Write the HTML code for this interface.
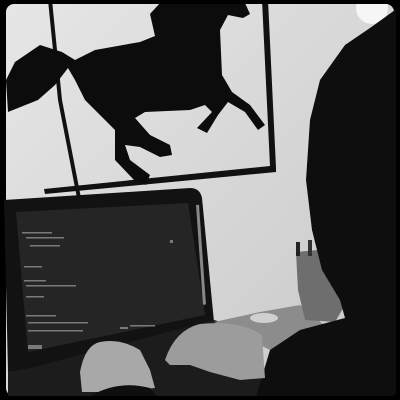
<!DOCTYPE html>
<html><head><style>html,body{margin:0;padding:0;background:#000}svg{display:block}</style></head>
<body>
<svg width="400" height="400" viewBox="0 0 400 400" xmlns="http://www.w3.org/2000/svg">
<defs>
<linearGradient id="w" x1="0" y1="0" x2="1" y2="1"><stop offset="0" stop-color="#e6e6e6"/><stop offset="1" stop-color="#c8c8c8"/></linearGradient>
</defs>
<rect width="400" height="400" fill="#000"/>
<rect x="6" y="4" width="388" height="392" rx="8" fill="url(#w)"/>
<ellipse cx="372" cy="8" rx="16" ry="16" fill="#f6f6f6"/>
<!-- frame -->
<path d="M262 0 L268 0 L276 168 L276 172 L45 194 L44 189 L270 166Z" fill="#111"/>
<path d="M48 0 L52 0 L62 100 L81 198 L77 198 L58 100Z" fill="#111"/>
<!-- horse -->
<path d="M8 112 L6 80 L15 62 L40 45 L62 52 L75 60 L95 50 L140 42 L155 36 L150 14 L160 3 L200 0 L245 3 L250 14 L243 18 L228 15 L220 30 L222 75 L232 92 L250 105 L265 125 L258 130 L245 112 L228 102 L218 115 L207 133 L197 128 L212 112 L205 105 L190 110 L145 112 L135 118 L150 135 L170 145 L172 155 L160 157 L140 147 L125 145 L130 160 L150 175 L146 185 L135 181 L115 160 L115 130 L100 115 L85 100 L75 80 L68 68 L55 85 L38 100 Z" fill="#0c0c0c"/>
<!-- laptop lid -->
<path d="M4 200 L190 188 Q200 188 202 198 L214 322 L30 370 L8 372Z" fill="#121212"/>
<path d="M16 212 L188 203 L205 315 L28 352Z" fill="#252525"/>
<rect x="196" y="205" width="3" height="100" fill="#888" transform="rotate(-4 196 205)"/>
<g fill="#7a7a7a">
<rect x="22" y="232" width="30" height="1.5"/><rect x="26" y="237" width="38" height="1.5"/><rect x="30" y="245" width="30" height="1.5"/>
<rect x="24" y="266" width="18" height="1.5"/><rect x="24" y="280" width="22" height="1.5"/><rect x="26" y="285" width="50" height="1.5"/>
<rect x="26" y="296" width="18" height="1.5"/><rect x="26" y="315" width="30" height="1.5"/><rect x="28" y="322" width="60" height="1.5"/><rect x="28" y="330" width="55" height="1.5"/>
<rect x="120" y="327" width="8" height="2"/><rect x="130" y="325" width="25" height="1.5"/>
<rect x="170" y="240" width="3" height="3"/><rect x="28" y="345" width="14" height="4"/>
</g>
<path d="M8 372 L30 368 L214 320 L250 330 L270 400 L8 400Z" fill="#1c1c1c"/>
<path d="M214 322 L260 312 L300 305 L330 330 L270 350Z" fill="#8c8c8c"/>
<ellipse cx="264" cy="318" rx="14" ry="5" fill="#d0d0d0"/>
<path d="M296 252 L340 248 L348 300 L335 322 L305 320 L298 290Z" fill="#6e6e6e"/>
<rect x="296" y="242" width="4" height="14" fill="#222"/><rect x="308" y="240" width="4" height="16" fill="#333"/>
<path d="M400 0 L395 10 L370 28 L345 45 L320 80 L310 120 L306 180 L312 230 L322 270 L340 300 L345 318 L300 330 L270 350 L255 400 L400 400Z" fill="#0e0e0e"/>
<path d="M80 372 Q85 345 100 342 Q120 338 140 350 L150 370 L155 388 L110 392 L82 392Z" fill="#a8a8a8"/>
<path d="M165 360 Q175 330 200 324 Q240 320 262 335 L265 378 L240 380 L210 372 L190 365 L170 365Z" fill="#9c9c9c"/>
<path d="M92 395 Q120 380 150 388 L160 400 L90 400Z" fill="#0e0e0e"/>
<rect x="0" y="0" width="400" height="400" rx="8" fill="none" stroke="#000" stroke-width="8"/>
</svg>
</body></html>
